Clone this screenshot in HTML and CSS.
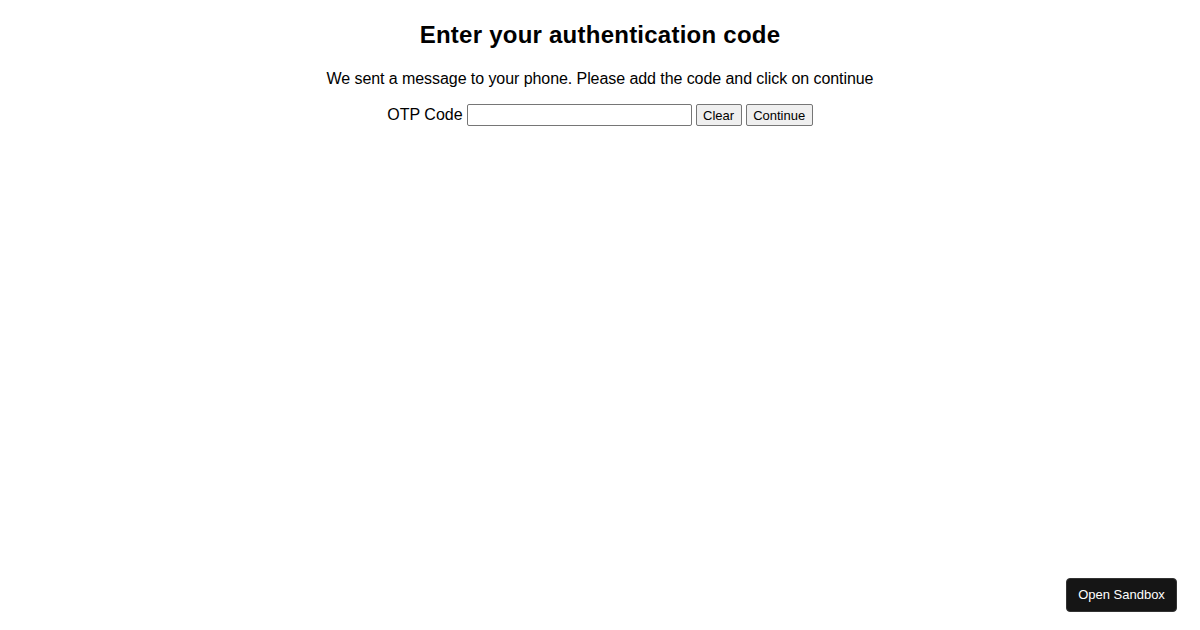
FILE: index.html
```html
<!DOCTYPE html>
<html>
<head>
<meta charset="utf-8">
<link rel="stylesheet" href="styles.css">
</head>
<body>
<div class="page">
  <h2 class="title">Enter your authentication code</h2>
  <p class="lead">We sent a message to your phone. Please add the code and click on continue</p>
  <form class="otp-row">
    <label class="otp-label" for="otp">OTP Code</label>
    <input class="otp-input" id="otp" type="text">
    <button class="btn" type="button">Clear</button>
    <button class="btn" type="button">Continue</button>
  </form>
</div>
<a class="sandbox">Open Sandbox</a>
</body>
</html>
```
FILE: styles.css
```css
html, body {
  margin: 0;
  padding: 0;
  background: #fff;
}
body {
  font-family: "Liberation Sans", Arial, sans-serif;
  color: #000;
  height: 630px;
  position: relative;
}
.page {
  text-align: center;
  padding-top: 9px;
}
.title {
  font-size: 24px;
  font-weight: bold;
  margin: 12px 0 0;
  line-height: 28px;
  letter-spacing: 0.24px;
}
.lead {
  font-size: 16px;
  margin: 21px 0 0;
  line-height: 18px;
  letter-spacing: -0.07px;
}
.otp-row {
  margin-top: 16px;
  display: flex;
  justify-content: center;
  align-items: center;
  gap: 4px;
}
.otp-label {
  font-size: 16px;
}
.otp-input {
  width: 225px;
  height: 22px;
  box-sizing: border-box;
  border: 1px solid #767676;
  border-radius: 2px;
  padding: 1px 2px;
  font-family: "Liberation Sans", Arial, sans-serif;
  font-size: 13px;
}
.btn {
  font-family: "Liberation Sans", Arial, sans-serif;
  font-size: 13px;
  height: 22px;
  box-sizing: border-box;
  padding: 1px 6.5px;
  border: 1px solid #767676;
  border-radius: 2px;
  background: #efefef;
  color: #000;
}
.sandbox {
  position: absolute;
  right: 23px;
  bottom: 18px;
  width: 111px;
  height: 34px;
  box-sizing: border-box;
  background: #151515;
  color: #fff;
  border-radius: 4px;
  font-size: 13px;
  display: flex;
  align-items: center;
  justify-content: center;
  padding-bottom: 1px;
  border: 1px solid #333;
}
```
